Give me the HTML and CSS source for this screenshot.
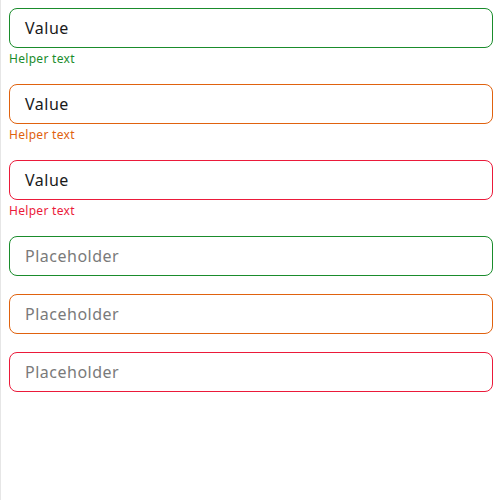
FILE: index.html
```html
<!DOCTYPE html>
<html>
<head>
<meta charset="utf-8">
<link rel="stylesheet" href="styles.css">
</head>
<body>
<div class="form">
  <div class="field success">
    <div class="input">Value</div>
    <div class="helper">Helper text</div>
  </div>
  <div class="field warning">
    <div class="input">Value</div>
    <div class="helper">Helper text</div>
  </div>
  <div class="field error">
    <div class="input">Value</div>
    <div class="helper">Helper text</div>
  </div>
  <div class="field success">
    <div class="input placeholder">Placeholder</div>
  </div>
  <div class="field warning">
    <div class="input placeholder">Placeholder</div>
  </div>
  <div class="field error">
    <div class="input placeholder">Placeholder</div>
  </div>
</div>
</body>
</html>
```
FILE: styles.css
```css
html {
  height: 100%;
  background: #fff;
}
body {
  margin: 0;
  min-height: 100%;
  box-sizing: border-box;
  border-left: 1px solid #e6e6e6;
  padding: 8px 7px 8px 8px;
  font-family: "Noto Sans", "DejaVu Sans", sans-serif;
}
.form {
  display: flex;
  flex-direction: column;
  gap: 18px;
}
.field {
  display: flex;
  flex-direction: column;
}
.input {
  box-sizing: border-box;
  height: 40px;
  border: 1px solid;
  border-radius: 8px;
  padding: 0 15px;
  display: flex;
  align-items: center;
  font-size: 16px;
  letter-spacing: 0.5px;
  color: #1a1a1a;
}
.placeholder {
  color: #7a7a7a;
}
.helper {
  box-sizing: border-box;
  height: 18px;
  font-size: 12px;
  letter-spacing: 0.3px;
  line-height: 16px;
  padding-top: 3px;
  overflow: hidden;
}
.success .input { border-color: #1a8c2c; }
.success .helper { color: #1a8c2c; }
.warning .input { border-color: #e0620e; }
.warning .helper { color: #e0620e; }
.error .input { border-color: #eb1a3a; }
.error .helper { color: #eb1a3a; }
```
